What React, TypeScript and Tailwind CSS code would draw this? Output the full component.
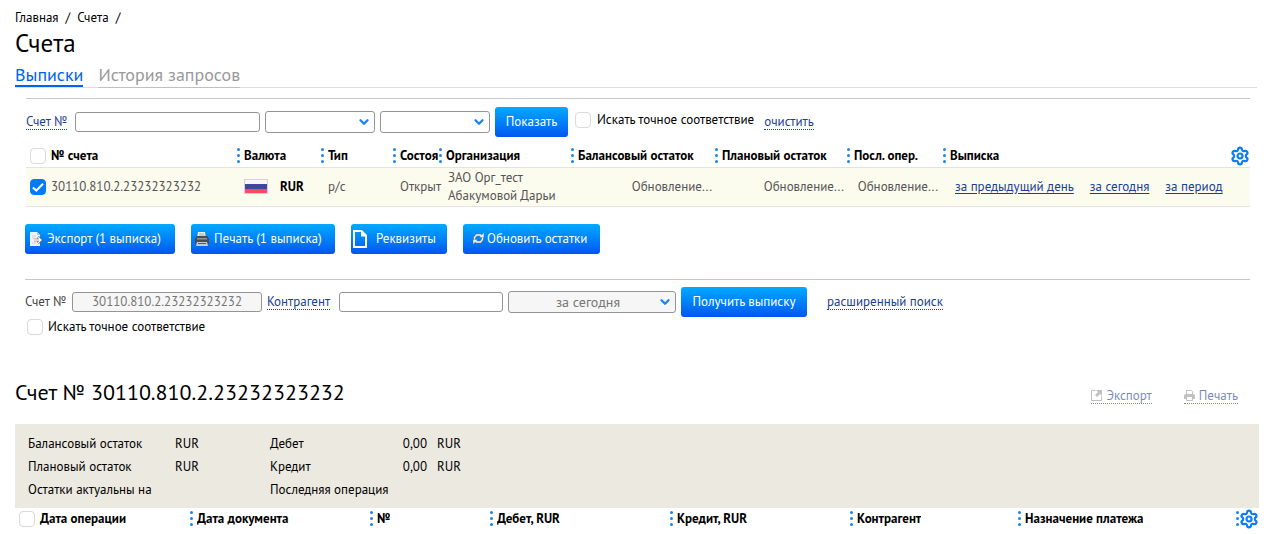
import type { ComponentProps, ReactNode } from "react";
import { ChevronDown, Settings } from "lucide-react";
import clsx from "clsx";

const accountColumns = [
  { title: "Валюта", width: "w-[84px]" },
  { title: "Тип", width: "w-[72px]" },
  { title: "Состоя", width: "w-[46px]" },
  { title: "Организация", width: "w-[132px]" },
  { title: "Балансовый остаток", width: "w-[144px]" },
  { title: "Плановый остаток", width: "w-[132px]" },
  { title: "Посл. опер.", width: "w-[96px]" },
];

const operationColumns = [
  { title: "Дата документа", width: "w-[180px]" },
  { title: "№", width: "w-[120px]" },
  { title: "Дебет, RUR", width: "w-[180px]" },
  { title: "Кредит, RUR", width: "w-[180px]" },
  { title: "Контрагент", width: "w-[168px]" },
  { title: "Назначение платежа", width: "" },
];

const periods = ["за предыдущий день", "за сегодня", "за период"];

const fieldClass =
  "rounded-[3px] border border-[#949494] bg-white disabled:bg-[#f6f6f6] disabled:text-[#777]";

function Check({ className, ...props }: ComponentProps<"input">) {
  return (
    <span className={clsx("inline-grid size-4 shrink-0 align-middle", className)}>
      <input
        type="checkbox"
        className="peer col-start-1 row-start-1 size-4 appearance-none rounded-[4px] border border-[#dadada] bg-white checked:border-[#007aff] checked:bg-[#007aff]"
        {...props}
      />
      <svg
        viewBox="0 0 16 16"
        className="pointer-events-none invisible col-start-1 row-start-1 size-4 peer-checked:visible"
        fill="none"
        stroke="#fff"
        strokeWidth="2"
      >
        <path d="M2.8 8.4 6.3 11.6 13 4.8" />
      </svg>
    </span>
  );
}

function Dropdown({ className, children, ...props }: ComponentProps<"select">) {
  return (
    <span className={clsx("inline-grid items-center", className)}>
      <select
        className={clsx(
          fieldClass,
          "col-start-1 row-start-1 h-[22px] w-full appearance-none pr-4 pl-2 text-center text-[14px] opacity-100",
        )}
        {...props}
      >
        {children}
      </select>
      <ChevronDown
        className="pointer-events-none col-start-1 row-start-1 mr-1 size-3.5 justify-self-end text-[#1a84f5]"
        strokeWidth={4}
      />
    </span>
  );
}

function BlueButton({ className, children }: { className?: string; children: ReactNode }) {
  return (
    <button
      type="button"
      className={clsx(
        "flex h-[30px] shrink-0 cursor-pointer items-center rounded-[3px] bg-linear-to-b from-[#08a9ff] to-[#0055ee] whitespace-nowrap text-white",
        className,
      )}
    >
      {children}
    </button>
  );
}

function DottedLink({ className, children }: { className?: string; children: ReactNode }) {
  return (
    <a
      href="#"
      className={clsx(
        "inline-flex shrink-0 items-center border-b border-dotted border-[#1b3f94] leading-[15px] whitespace-nowrap text-[#1b3f94]",
        className,
      )}
    >
      {children}
    </a>
  );
}

function Dots() {
  return (
    <svg width="4" height="16" viewBox="0 0 4 16" className="shrink-0 text-[#1a84f5]" fill="currentColor">
      <circle cx="2.5" cy="1.5" r="1.5" />
      <circle cx="2.5" cy="7.5" r="1.5" />
      <circle cx="2.5" cy="13.5" r="1.5" />
    </svg>
  );
}

function HeadCell({ title, width }: { title: string; width: string }) {
  return (
    <th className={clsx("overflow-hidden p-0 text-left font-bold", width)}>
      <div className="flex items-center gap-1 overflow-hidden whitespace-nowrap">
        <Dots />
        <span className="overflow-hidden">{title}</span>
      </div>
    </th>
  );
}

function GearButton() {
  return (
    <button type="button" aria-label="Настройки таблицы" className="block cursor-pointer text-[#0a7cf5]">
      <Settings className="size-5" strokeWidth={2.6} />
    </button>
  );
}

function FlagRu() {
  return (
    <svg width="24" height="15" viewBox="0 0 24 15" className="shrink-0">
      <rect width="24" height="15" fill="#d4d4d8" />
      <rect x="1" y="1" width="22" height="4" fill="#f6f6fa" />
      <rect x="1" y="5" width="22" height="5" fill="#41479b" />
      <rect x="1" y="10" width="22" height="4" fill="#ff4b55" />
    </svg>
  );
}

function ExportIcon() {
  return (
    <svg width="14" height="16" viewBox="0 0 14 16" fill="none">
      <path d="M1 1h7l3 3v11H1z" fill="#eef3f5" />
      <path d="M8 1v3h3" fill="#b9c8cf" />
      <path d="M3 5h4M3 7h3M3 12h4" stroke="#ccd6da" />
      <path d="M5 9h7M9 6l3 3-3 3" stroke="#4b6470" strokeWidth="2.6" />
      <path d="M5 9h7M9.2 6.2 12 9l-2.8 2.8" stroke="#fff" strokeWidth="1.3" />
    </svg>
  );
}

function PrintIcon() {
  return (
    <svg width="16" height="16" viewBox="0 0 16 16">
      <path d="M4 1h7l1 6H3z" fill="#e9eef2" />
      <path d="M5 3h5M5 5h6" stroke="#9eabb5" />
      <path d="M2.5 5h11L15 8v5H1V8z" fill="#4a4e54" />
      <path d="M3 7h10v1.5H3z" fill="#8c939b" />
      <path d="M3 11h10l1 4H2z" fill="#c5cacf" />
      <path d="M4 12.5h8" stroke="#555b62" />
    </svg>
  );
}

function PageIcon() {
  return (
    <svg width="14" height="18" viewBox="0 0 14 18" fill="none">
      <path d="M1 1h7.5L13 5.5V17H1z" stroke="#fff" strokeWidth="2" />
      <path d="M8 0v6.5h6z" fill="#fff" />
    </svg>
  );
}

function RefreshIcon() {
  return (
    <svg width="11" height="11" viewBox="0 0 11 11" fill="none">
      <path
        d="M1.5 6.5v-2l2-2.5h4l2 2M9.500 4.500v2L7.500 9h-4l-2-2"
        stroke="#6b7484"
        strokeWidth="2.4"
      />
      <path d="M1.5 6.5v-2l2-2.5h4l1.500 1.500M9.500 4.500v2L7.500 9h-4L2 7.500" stroke="#f4f1ea" strokeWidth="1.3" />
      <path d="M10.8 0v4.300H6.500zM.2 11V6.700h4.300z" fill="#f4f1ea" />
    </svg>
  );
}

function OpenIcon() {
  return (
    <svg width="11" height="11" viewBox="0 0 11 11" fill="none" stroke="#999">
      <path d="M4.5.5h-4v10h10v-4" />
      <path d="M5 0h6v6L9 4 6 7 4 5l3-3z" fill="#999" stroke="none" />
    </svg>
  );
}

function SmallPrintIcon() {
  return (
    <svg width="11" height="11" viewBox="0 0 11 11" fill="none" stroke="#999">
      <path d="M2.5 4V.5h5l1 1V4" />
      <path d="M0 6q0-2 2-2h7q2 0 2 2v3H9V7H2v2H0z" fill="#999" stroke="none" />
      <path d="M2.5 7v3.500h6V7" />
    </svg>
  );
}

function Filters() {
  return (
    <form className="flex items-center border-t border-[#c8c8c8] pt-2">
      <label htmlFor="account" className="w-[49px] shrink-0">
        <DottedLink>Счет №</DottedLink>
      </label>
      <input id="account" className={clsx(fieldClass, "mr-[5px] h-5 w-[185px] px-2")} />
      <Dropdown aria-label="Валюта" className="mr-[5px] w-[110px]" />
      <Dropdown aria-label="Тип счета" className="mr-[5px] w-[110px]" />
      <BlueButton className="w-[73px] justify-center">Показать</BlueButton>
      <label className="mb-1 ml-[7px] flex items-center gap-[6px] whitespace-nowrap">
        <Check />
        Искать точное соответствие
      </label>
      <DottedLink className="ml-[10px]">очистить</DottedLink>
    </form>
  );
}

function AccountsTable() {
  return (
    <table className="mt-2 w-full table-fixed border-collapse">
      <thead>
        <tr className="h-[22px]">
          <th className="w-[210px] p-0 pl-1 text-left font-bold">
            <label className="flex items-center gap-[5px]">
              <Check />№ счета
            </label>
          </th>
          {accountColumns.map((c) => (
            <HeadCell key={c.title} {...c} />
          ))}
          <th className="p-0 text-left font-bold">
            <div className="flex items-center gap-1">
              <Dots />
              <span className="grow">Выписка</span>
              <GearButton />
            </div>
          </th>
        </tr>
      </thead>
      <tbody>
        <tr className="h-[39px] border-y border-[#e3e3e3] bg-[#fbfbee] text-[#555]">
          <td className="p-0 pl-1">
            <label className="flex items-center gap-[5px]">
              <Check defaultChecked />
              30110.810.2.23232323232
            </label>
          </td>
          <td className="p-0 pl-2">
            <div className="flex items-center gap-3 font-bold text-black">
              <FlagRu />
              RUR
            </div>
          </td>
          <td className="p-0 pl-2">р/с</td>
          <td className="p-0 pl-2">Открыт</td>
          <td className="p-0 pl-[10px] leading-[18px]">ЗАО Орг_тест Абакумовой Дарьи</td>
          <td className="p-0 pr-[2px] text-right">Обновление...</td>
          <td className="p-0 pr-[2px] text-right">Обновление...</td>
          <td className="p-0 pr-1 text-right">Обновление...</td>
          <td className="p-0 pl-[13px]">
            <div className="flex gap-4 whitespace-nowrap text-[#1b3f94]">
              {periods.map((p) => (
                <a key={p} href="#" className="underline underline-offset-2">
                  {p}
                </a>
              ))}
            </div>
          </td>
        </tr>
      </tbody>
    </table>
  );
}

function StatementForm() {
  return (
    <form className="mr-[9px] ml-[10px] border-t border-[#c8c8c8] pt-[7px]">
      <div className="flex items-center">
        <label htmlFor="statement-account" className="w-[47px] shrink-0 whitespace-nowrap text-[#444]">
          Счет №
        </label>
        <input
          id="statement-account"
          disabled
          defaultValue="30110.810.2.23232323232"
          className={clsx(fieldClass, "mr-[5px] h-5 w-[190px] text-center")}
        />
        <label htmlFor="partner" className="w-[72px] shrink-0">
          <DottedLink>Контрагент</DottedLink>
        </label>
        <input id="partner" className={clsx(fieldClass, "mr-[5px] h-5 w-[164px] px-2")} />
        <Dropdown aria-label="Период" disabled className="mr-[5px] w-[168px]">
          <option>за сегодня</option>
        </Dropdown>
        <BlueButton className="w-[126px] justify-center">Получить выписку</BlueButton>
        <DottedLink className="ml-5">расширенный поиск</DottedLink>
      </div>
      <label className="mt-[1px] ml-[2px] flex w-fit items-center gap-[5px]">
        <Check />
        Искать точное соответствие
      </label>
    </form>
  );
}

function Summary() {
  return (
    <dl className="grid grid-cols-[147px_95px_112px_45px_1fr] bg-[#ece9e1] pt-2 pb-[7px] pl-[13px] leading-[23px]">
      <dt>Балансовый остаток</dt>
      <dd>RUR</dd>
      <dt>Дебет</dt>
      <dd className="text-right">0,00</dd>
      <dd className="pl-[10px]">RUR</dd>
      <dt>Плановый остаток</dt>
      <dd>RUR</dd>
      <dt>Кредит</dt>
      <dd className="text-right">0,00</dd>
      <dd className="pl-[10px]">RUR</dd>
      <dt className="col-span-2">Остатки актуальны на</dt>
      <dt className="col-span-3">Последняя операция</dt>
    </dl>
  );
}

function OperationsTable() {
  return (
    <table className="w-full table-fixed border-collapse">
      <thead>
        <tr className="h-[22px]">
          <th className="w-[174px] p-0 pl-1 text-left font-bold">
            <label className="flex items-center gap-[5px]">
              <Check />
              Дата операции
            </label>
          </th>
          {operationColumns.map((c) => (
            <HeadCell key={c.title} {...c} />
          ))}
          <th className="w-[24px] p-0">
            <div className="flex items-center">
              <Dots />
              <GearButton />
            </div>
          </th>
        </tr>
      </thead>
    </table>
  );
}

export default function App() {
  return (
    <main className="bg-white pt-[9px] pr-[13px] pl-[15px] font-['PT_Sans','Noto_Sans',sans-serif] text-[13px] leading-[18px] text-black">
      <nav aria-label="Навигация" className="flex gap-[7px]">
        <a href="#">Главная</a>
        <span>/</span>
        <a href="#">Счета</a>
        <span>/</span>
      </nav>
      <h1 className="text-[25px] leading-8">Счета</h1>

      <nav className="mt-1 mr-[2px] flex gap-[15px] border-b border-[#dedede] text-[18px] leading-6">
        <a href="#" aria-current="page" className="h-[24px] border-b-2 border-[#0061f2] text-[#0061f2]">
          Выписки
        </a>
        <a href="#" className="-mb-px border-b border-[#c0c0c0] text-[#999]">
          История запросов
        </a>
      </nav>

      <section className="mt-[10px] mr-[9px] ml-[11px]">
        <Filters />
        <AccountsTable />
      </section>

      <div className="mt-[17px] mb-[25px] ml-[10px] flex gap-4">
        <BlueButton className="w-[150px] gap-1 pl-1">
          <ExportIcon />
          Экспорт (1 выписка)
        </BlueButton>
        <BlueButton className="w-[144px] gap-1 pl-[3px]">
          <PrintIcon />
          Печать (1 выписка)
        </BlueButton>
        <BlueButton className="w-[96px] gap-[9px] pl-[2px]">
          <PageIcon />
          Реквизиты
        </BlueButton>
        <BlueButton className="w-[137px] gap-[3px] pl-[10px]">
          <RefreshIcon />
          Обновить остатки
        </BlueButton>
      </div>

      <StatementForm />

      <div className="mt-10 mb-4 flex items-center justify-between">
        <h2 className="text-[22px] leading-8">Счет № 30110.810.2.23232323232</h2>
        <div className="mt-2 mr-[21px] flex gap-8 opacity-60">
          <DottedLink className="gap-1">
            <OpenIcon />
            Экспорт
          </DottedLink>
          <DottedLink className="gap-1">
            <SmallPrintIcon />
            Печать
          </DottedLink>
        </div>
      </div>

      <Summary />
      <OperationsTable />
    </main>
  );
}
